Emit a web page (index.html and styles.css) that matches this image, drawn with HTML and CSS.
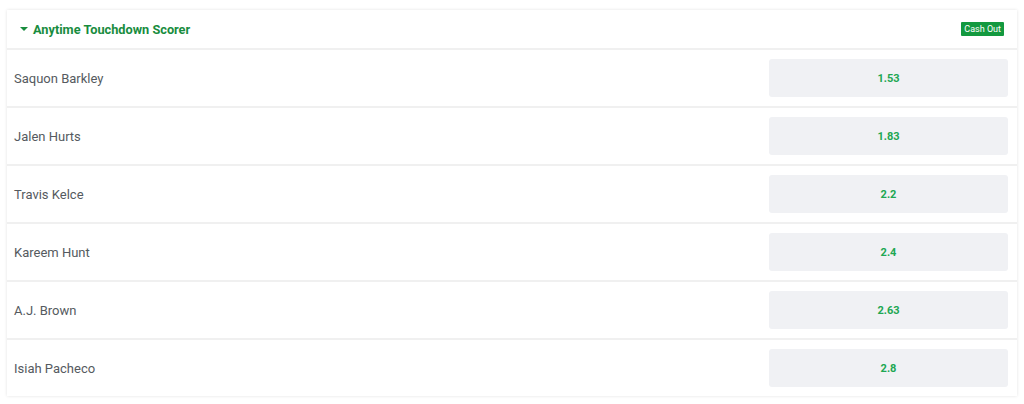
FILE: index.html
```html
<!DOCTYPE html>
<html lang="en">
<head>
    <meta charset="UTF-8">
    <meta name="viewport" content="width=device-width, initial-scale=1.0">
    <title>Anytime Touchdown Scorer</title>
    <link rel="stylesheet" href="styles.css">
</head>
<body>
    <div class="market">
        <div class="market-header">
            <div class="market-title">
                <span class="caret"></span>
                <span>Anytime Touchdown Scorer</span>
            </div>
            <span class="cashout">Cash Out</span>
        </div>
        <div class="row">
            <span class="name">Saquon Barkley</span>
            <button class="odds">1.53</button>
        </div>
        <div class="row">
            <span class="name">Jalen Hurts</span>
            <button class="odds">1.83</button>
        </div>
        <div class="row">
            <span class="name">Travis Kelce</span>
            <button class="odds">2.2</button>
        </div>
        <div class="row">
            <span class="name">Kareem Hunt</span>
            <button class="odds">2.4</button>
        </div>
        <div class="row">
            <span class="name">A.J. Brown</span>
            <button class="odds">2.63</button>
        </div>
        <div class="row">
            <span class="name">Isiah Pacheco</span>
            <button class="odds">2.8</button>
        </div>
    </div>
</body>
</html>
```

FILE: styles.css
```css
body {
    margin: 0;
    padding: 10px 7px 6px 7px;
    background-color: #ffffff;
    font-family: Roboto, "Liberation Sans", Arial, sans-serif;
}
.market {
    background-color: white;
    box-shadow: 0 0 3px rgba(0, 0, 0, 0.12);
}
.market-header {
    display: flex;
    justify-content: space-between;
    align-items: center;
    height: 38px;
    padding: 0 13px 0 13px;
    border-bottom: 2px solid #f0f0f0;
}
.market-title {
    display: flex;
    align-items: center;
    gap: 5px;
    color: #188c3e;
    font-size: 12.75px;
    font-weight: bold;
}
.caret {
    width: 0;
    height: 0;
    border-left: 4px solid transparent;
    border-right: 4px solid transparent;
    border-top: 4px solid #188c3e;
}
.cashout {
    background-color: #13993f;
    color: white;
    font-size: 9px;
    padding: 2px 3px;
    border-radius: 1px;
}
.row {
    display: flex;
    justify-content: space-between;
    align-items: center;
    height: 56px;
    padding: 0 9px 0 7px;
    border-bottom: 2px solid #f0f0f0;
}
.row:last-child {
    border-bottom: none;
}
.name {
    color: #555a60;
    font-size: 13px;
}
.odds {
    width: 239px;
    height: 38px;
    background-color: #f0f1f4;
    border: none;
    border-radius: 3px;
    color: #20a752;
    font-family: inherit;
    font-size: 11px;
    font-weight: bold;
    cursor: pointer;
}
```
